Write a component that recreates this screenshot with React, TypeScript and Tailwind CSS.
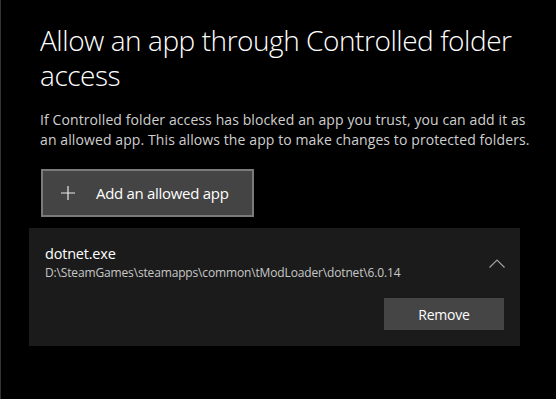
import React from "react";

export default function App() {
  return (
    <div
      className="w-[556px] h-[399px] bg-black border-l border-[#333333] overflow-hidden"
      style={{ fontFamily: '"Open Sans", "Noto Sans", sans-serif' }}
    >
      <div className="pt-[23px]">
        <h1 className="pl-[39px] pr-[20px] text-[28px] leading-[35px] font-light text-white tracking-[-0.45px]">
          Allow an app through Controlled folder access
        </h1>
        <p className="pl-[39px] w-[535px] mt-[17px] text-[14px] leading-[20px] text-[#cfcfcf] tracking-[0.1px]">
          If Controlled folder access has blocked an app you trust, you can add it as an allowed app. This allows the app to make changes to protected folders.
        </p>
        <div className="pl-[40px] mt-[19px]">
          <button className="w-[213px] h-[48px] bg-[#444444] border-2 border-[#7a7a7a] flex items-center text-white">
            <svg width="16" height="16" viewBox="0 0 16 16" className="ml-[17px]">
              <path d="M8 1v14M1 8h14" stroke="#e8e8e8" strokeWidth="1.2" />
            </svg>
            <span className="ml-[20px] text-[15px] tracking-[-0.3px]">Add an allowed app</span>
          </button>
        </div>
        <div className="ml-[28px] mt-[11px] w-[491px] h-[118px] bg-[#1b1b1b] relative">
          <div className="pl-[16px] pt-[16px]">
            <div className="text-[14.5px] leading-[20px] text-white tracking-[-0.2px]">dotnet.exe</div>
            <div className="text-[12px] leading-[17px] text-[#c8c8c8] tracking-[-0.15px]">
              D:\SteamGames\steamapps\common\tModLoader\dotnet\6.0.14
            </div>
          </div>
          <svg width="16" height="9" viewBox="0 0 16 9" className="absolute left-[460px] top-[31px]">
            <path d="M0.5 8.5L8 1L15.5 8.5" stroke="#a0a0a0" strokeWidth="1.2" fill="none" />
          </svg>
          <div className="flex justify-end pr-[16px] mt-[17px]">
            <button className="w-[120px] h-[32px] bg-[#454545] text-white text-[14px] tracking-[-0.2px]">
              Remove
            </button>
          </div>
        </div>
      </div>
    </div>
  );
}
